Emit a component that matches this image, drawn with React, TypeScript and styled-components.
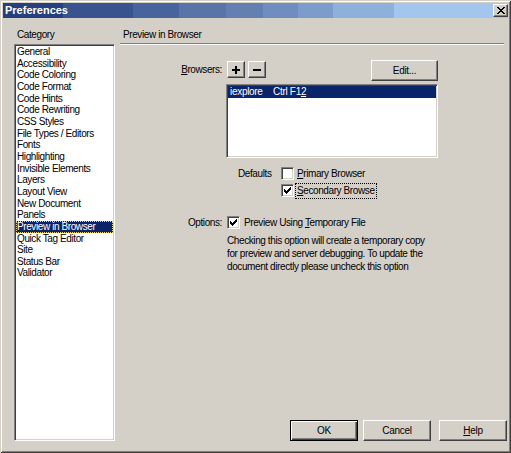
import React from "react";
import styled, { createGlobalStyle, css } from "styled-components";

const Global = createGlobalStyle`
  html, body { margin: 0; padding: 0; background: #d4d0c8; overflow: hidden; }
  body { font-family: "Liberation Sans", Arial, sans-serif; font-size: 10px; color: #000; }
  * { box-sizing: border-box; }
`;

const Window = styled.div`
  width: 511px;
  height: 453px;
  background: #d4d0c8;
  padding: 3px;
  display: flex;
  flex-direction: column;
  box-shadow: inset 1px 1px #d4d0c8, inset -1px -1px #404040, inset 2px 2px #ffffff, inset -2px -2px #808080;
`;

const TitleBar = styled.div`
  height: 15px;
  display: flex;
  align-items: center;
  padding-left: 2px;
  background: linear-gradient(
    to right,
    #263f7f 0px, #263f7f 60px,
    #39538f 60px, #39538f 130px,
    #48649c 130px, #48649c 176px,
    #5874a8 176px, #5874a8 223px,
    #6480b1 223px, #6480b1 260px,
    #6f8ebf 260px, #6f8ebf 295px,
    #7c9dcb 295px, #7c9dcb 330px,
    #8eb1dc 330px, #8eb1dc 391px,
    #a2c6ee 391px, #a2c6ee 100%
  );
`;

const TitleText = styled.span`
  color: #fff;
  font-weight: bold;
  font-size: 11px;
  line-height: 15px;
  flex: 1;
`;

const raised = css`
  background: #d4d0c8;
  border: 1px solid;
  border-color: #ffffff #404040 #404040 #ffffff;
  box-shadow: inset -1px -1px #808080, inset 1px 1px #d4d0c8;
`;

const sunken = css`
  background: #fff;
  border: 1px solid;
  border-color: #808080 #ffffff #ffffff #808080;
  box-shadow: inset 1px 1px #404040, inset -1px -1px #d4d0c8;
`;

const CloseButton = styled.div`
  ${raised};
  width: 15px;
  height: 13px;
  display: flex;
  align-items: center;
  justify-content: center;
`;

const Body = styled.div`
  flex: 1;
  display: flex;
  gap: 5px;
  padding: 11px 1px 9px 11px;
  min-height: 0;
`;

const LeftCol = styled.div`
  width: 101px;
  display: flex;
  flex-direction: column;
`;

const RightCol = styled.div`
  flex: 1;
  display: flex;
  flex-direction: column;
`;

const Heading = styled.div`
  line-height: 12px;
  height: 12px;
  padding-left: 3px;
  letter-spacing: -0.4px;
  white-space: nowrap;
`;

const CategoryList = styled.div`
  ${sunken};
  flex: 1;
  margin-top: 3px;
  padding: 1px 1px;
`;

const CategoryItem = styled.div<{ $selected?: boolean }>`
  height: 11.67px;
  line-height: 11.67px;
  padding-left: 1px;
  letter-spacing: -0.4px;
  white-space: nowrap;
  ${(p) =>
    p.$selected &&
    css`
      background: #0a246a;
      color: #fff;
      outline: 1px dotted #e8d070;
      outline-offset: -1px;
    `}
`;

const Separator = styled.div`
  margin-top: 2px;
  margin-right: 3px;
  height: 2px;
  border-top: 1px solid #808080;
  border-bottom: 1px solid #ffffff;
`;

const FieldRow = styled.div<{ $top: number; $height?: number }>`
  display: flex;
  gap: 4px;
  margin-top: ${(p) => p.$top}px;
  ${(p) => (p.$height ? `height: ${p.$height}px;` : "")}
`;

const LabelCell = styled.div<{ $pad?: number; $lh?: number }>`
  width: 102px;
  flex: none;
  text-align: right;
  letter-spacing: -0.4px;
  white-space: nowrap;
  padding-top: ${(p) => p.$pad ?? 0}px;
  line-height: ${(p) => p.$lh ?? 12}px;
`;

const ContentCell = styled.div`
  width: 212px;
  flex: none;
`;

const ButtonBar = styled.div`
  display: flex;
  align-items: flex-start;
  height: 22px;
`;

const SmallButton = styled.div<{ $left: number }>`
  ${raised};
  width: 18px;
  height: 17px;
  margin-top: 1px;
  margin-left: ${(p) => p.$left}px;
  display: flex;
  align-items: center;
  justify-content: center;
`;

const PushButton = styled.div<{ $w: number; $default?: boolean }>`
  ${raised};
  width: ${(p) => p.$w}px;
  height: 21px;
  display: flex;
  align-items: center;
  justify-content: center;
  letter-spacing: -0.3px;
  font-size: 10px;
  ${(p) =>
    p.$default &&
    css`
      border: 1px solid #000;
      box-shadow: inset 1px 1px #ffffff, inset -1px -1px #404040, inset -2px -2px #808080;
    `}
`;

const EditButton = styled(PushButton)`
  margin-left: auto;
`;

const BrowserList = styled.div`
  ${sunken};
  height: 74px;
  padding: 1px;
`;

const BrowserItem = styled.div`
  display: flex;
  height: 12px;
  line-height: 12px;
  background: #0a246a;
  color: #fff;
  padding-left: 2px;
  letter-spacing: -0.3px;
  white-space: nowrap;
`;

const BrowserName = styled.span`
  width: 43px;
`;

const DefaultsBlock = styled.div`
  display: flex;
  padding-left: 12px;
`;

const DefaultsLabel = styled.div`
  width: 43px;
  line-height: 17px;
  letter-spacing: -0.4px;
`;

const CheckColumn = styled.div`
  display: flex;
  flex-direction: column;
`;

const CheckRow = styled.div<{ $gap?: number; $indent?: number }>`
  display: flex;
  align-items: center;
  height: 17px;
  gap: ${(p) => p.$gap ?? 3}px;
  padding-left: ${(p) => p.$indent ?? 0}px;
  white-space: nowrap;
  letter-spacing: -0.4px;
`;

const Box = styled.div`
  ${sunken};
  width: 13px;
  height: 13px;
  flex: none;
  display: flex;
  align-items: center;
  justify-content: center;
`;

const FocusText = styled.span`
  outline: 1px dotted #000;
  outline-offset: 0px;
  padding: 1px 1px;
  line-height: 12px;
`;

const Description = styled.div`
  line-height: 13px;
  padding-left: 1px;
  letter-spacing: -0.4px;
  white-space: nowrap;
`;

const Footer = styled.div`
  margin-top: auto;
  display: flex;
  justify-content: flex-end;
`;

const FooterGap = styled.div<{ $w: number }>`
  width: ${(p) => p.$w}px;
`;

const Check = () => (
  <svg width="7" height="7" viewBox="0 0 7 7" shapeRendering="crispEdges">
    <path d="M0 2h1v1h1v1h1v-1h1v-1h1v-1h1v-1h1v3h-1v1h-1v1h-1v1h-1v1h-1v-1h-1v-1h-1v-1h-1z" fill="#000" />
  </svg>
);

const CloseGlyph = () => (
  <svg width="8" height="7" viewBox="0 0 8 7" shapeRendering="crispEdges">
    <path d="M0 0h2v1h1v1h2v-1h1v-1h2v1h-1v1h-1v1h-1v1h1v1h1v1h1v1h-2v-1h-1v-1h-2v1h-1v1h-2v-1h1v-1h1v-1h1v-1h-1v-1h-1v-1h-1z" fill="#000" />
  </svg>
);

const Plus = () => (
  <svg width="8" height="8" viewBox="0 0 8 8" shapeRendering="crispEdges">
    <rect x="3" y="0" width="2" height="8" fill="#000" />
    <rect x="0" y="3" width="8" height="2" fill="#000" />
  </svg>
);

const Minus = () => (
  <svg width="8" height="8" viewBox="0 0 8 8" shapeRendering="crispEdges">
    <rect x="0" y="3" width="8" height="2" fill="#000" />
  </svg>
);

const categories = [
  "General",
  "Accessibility",
  "Code Coloring",
  "Code Format",
  "Code Hints",
  "Code Rewriting",
  "CSS Styles",
  "File Types / Editors",
  "Fonts",
  "Highlighting",
  "Invisible Elements",
  "Layers",
  "Layout View",
  "New Document",
  "Panels",
  "Preview in Browser",
  "Quick Tag Editor",
  "Site",
  "Status Bar",
  "Validator",
];

export default function App() {
  return (
    <>
      <Global />
      <Window>
        <TitleBar>
          <TitleText>Preferences</TitleText>
          <CloseButton>
            <CloseGlyph />
          </CloseButton>
        </TitleBar>
        <Body>
          <LeftCol>
            <Heading>Category</Heading>
            <CategoryList>
              {categories.map((c) => (
                <CategoryItem key={c} $selected={c === "Preview in Browser"}>
                  {c}
                </CategoryItem>
              ))}
            </CategoryList>
          </LeftCol>
          <RightCol>
            <Heading>Preview in Browser</Heading>
            <Separator />
            <FieldRow $top={15} $height={22}>
              <LabelCell $pad={4}>
                <u>B</u>rowsers:
              </LabelCell>
              <ContentCell>
                <ButtonBar>
                  <SmallButton $left={1}>
                    <Plus />
                  </SmallButton>
                  <SmallButton $left={3}>
                    <Minus />
                  </SmallButton>
                  <EditButton $w={67}>Edit...</EditButton>
                </ButtonBar>
              </ContentCell>
            </FieldRow>
            <FieldRow $top={2}>
              <LabelCell />
              <ContentCell>
                <BrowserList>
                  <BrowserItem>
                    <BrowserName>iexplore</BrowserName>
                    <span>
                      Ctrl F1<u>2</u>
                    </span>
                  </BrowserItem>
                </BrowserList>
              </ContentCell>
            </FieldRow>
            <FieldRow $top={7}>
              <LabelCell />
              <ContentCell>
                <DefaultsBlock>
                  <DefaultsLabel>Defaults</DefaultsLabel>
                  <CheckColumn>
                    <CheckRow>
                      <Box />
                      <span>
                        <u>P</u>rimary Browser
                      </span>
                    </CheckRow>
                    <CheckRow $gap={2}>
                      <Box>
                        <Check />
                      </Box>
                      <FocusText>
                        <u>S</u>econdary Browse
                      </FocusText>
                    </CheckRow>
                  </CheckColumn>
                </DefaultsBlock>
              </ContentCell>
            </FieldRow>
            <FieldRow $top={15}>
              <LabelCell $lh={17}>Options:</LabelCell>
              <ContentCell>
                <CheckRow $gap={4} $indent={1}>
                  <Box>
                    <Check />
                  </Box>
                  <span>
                    Preview Using <u>T</u>emporary File
                  </span>
                </CheckRow>
              </ContentCell>
            </FieldRow>
            <FieldRow $top={3}>
              <LabelCell />
              <ContentCell>
                <Description>
                  Checking this option will create a temporary copy
                  <br />
                  for preview and server debugging. To update the
                  <br />
                  document directly please uncheck this option
                </Description>
              </ContentCell>
            </FieldRow>
            <Footer>
              <PushButton $w={68} $default>
                OK
              </PushButton>
              <FooterGap $w={5} />
              <PushButton $w={68}>Cancel</PushButton>
              <FooterGap $w={8} />
              <PushButton $w={68}>
                <u>H</u>elp
              </PushButton>
            </Footer>
          </RightCol>
        </Body>
      </Window>
    </>
  );
}
